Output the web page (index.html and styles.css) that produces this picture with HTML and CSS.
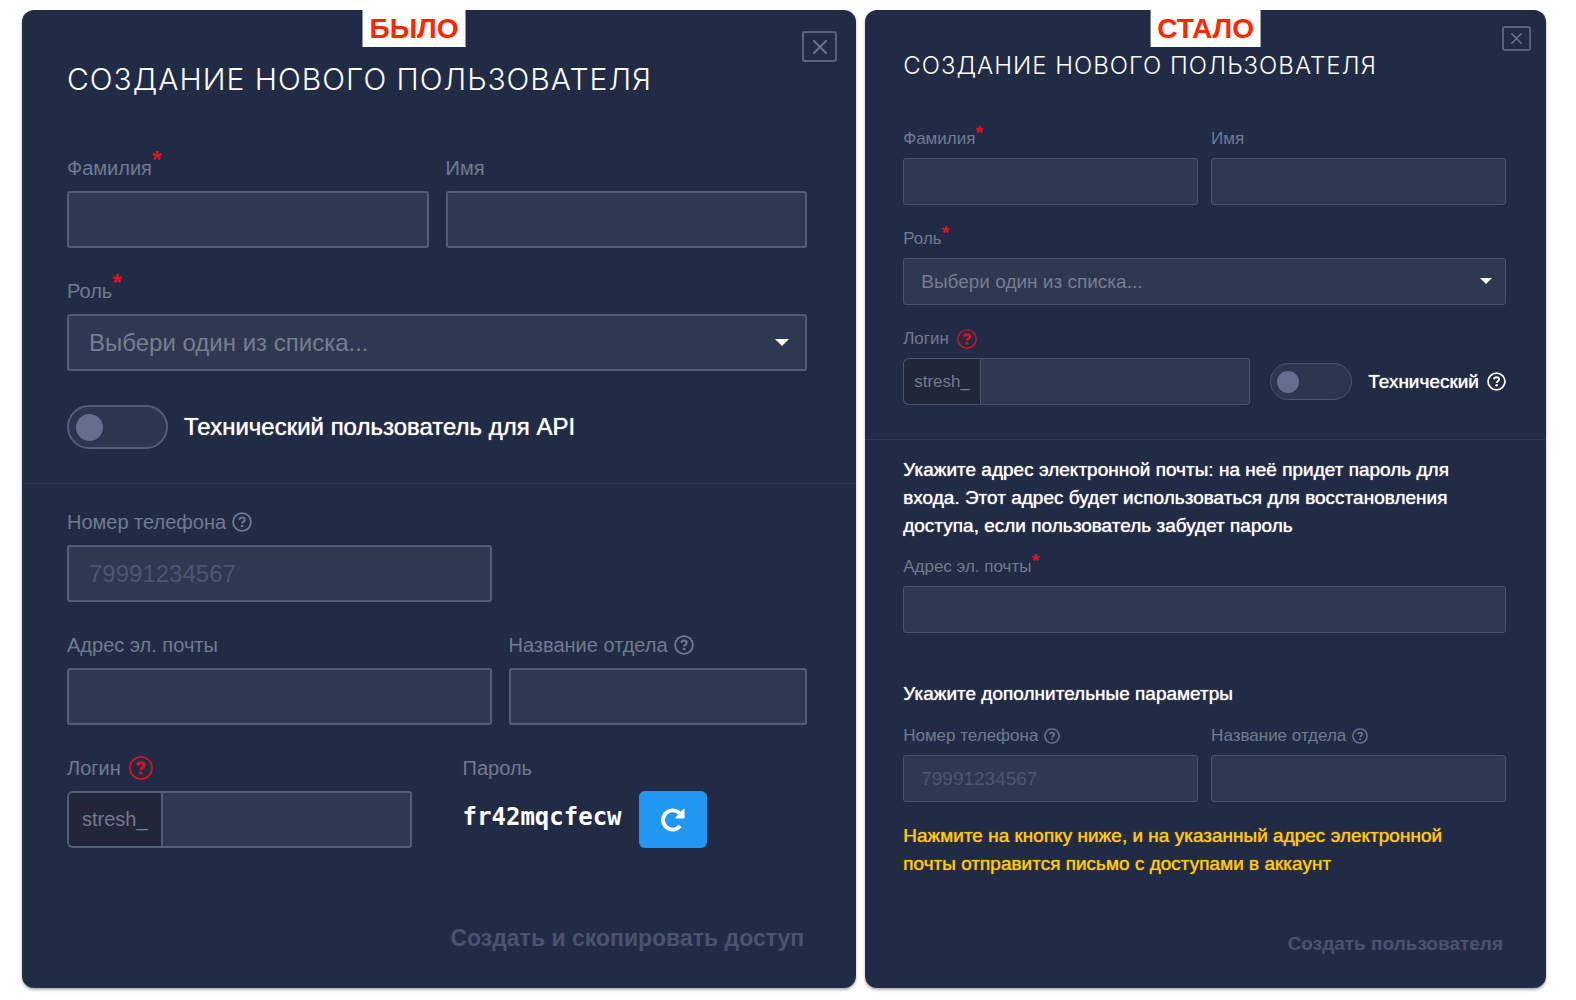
FILE: index.html
```html
<!DOCTYPE html>
<html lang="ru">
<head>
  <meta charset="UTF-8" />
  <meta name="viewport" content="width=device-width, initial-scale=1.0" />
  <title>Создание нового пользователя</title>
  <link rel="stylesheet" href="styles.css">
</head>
<body>
  <svg class="sprite" aria-hidden="true">
    <symbol id="icon-help" viewBox="0 0 20 20">
      <circle cx="10" cy="10" r="8.9" fill="none" stroke="currentColor" stroke-width="1.8" />
      <path d="M7.3 7.7C7.6 6.3 8.6 5.6 10 5.6c1.5 0 2.7.9 2.7 2.2 0 1.9-2.5 1.9-2.5 3.8" fill="none" stroke="currentColor" stroke-width="2" />
      <circle cx="10.1" cy="14" r="1.3" fill="currentColor" />
    </symbol>
    <symbol id="icon-help-bold" viewBox="0 0 24 24">
      <circle cx="12" cy="12" r="11" fill="none" stroke="currentColor" stroke-width="1.7" />
      <path d="M8.5 9.1C8.9 7.5 10.2 6.7 12 6.7c1.9 0 3.3 1 3.3 2.6 0 2.3-3.2 2.2-3.2 4.6" fill="none" stroke="currentColor" stroke-width="3.1" />
      <circle cx="12" cy="17" r="1.8" fill="currentColor" />
    </symbol>
    <symbol id="icon-close" viewBox="0 0 14 14">
      <path d="M1 1l12 12M13 1L1 13" fill="none" stroke="currentColor" stroke-width="1.8" stroke-linecap="round" />
    </symbol>
    <symbol id="icon-repeat" viewBox="0 0 24 24">
      <path d="M19.2 17.9A9.6 9.6 0 1 1 18.6 5.4" fill="none" stroke="currentColor" stroke-width="3.8" />
      <path d="M23.6 1.600v8.200q0 .8-.8.8h-7.600q-1.600-.1-.6-1.400l7.700-8.100q1.200-1 1.300.5z" fill="currentColor" />
    </symbol>
  </svg>

  <main class="compare">
    <form class="panel panel-before">
      <div class="tag">БЫЛО</div>
      <button type="button" class="close" aria-label="Закрыть"><svg><use href="#icon-close" /></svg></button>
      <h1>Создание нового пользователя</h1>
      <div class="row">
        <div class="field">
          <label for="oldSurname">Фамилия<span class="req">*</span></label>
          <input type="text" id="oldSurname" />
        </div>
        <div class="field">
          <label for="oldName">Имя</label>
          <input type="text" id="oldName" />
        </div>
      </div>
      <div class="row">
        <div class="field">
          <label for="oldRole">Роль<span class="req">*</span></label>
          <div class="select">
            <select id="oldRole"><option>Выбери один из списка...</option></select>
          </div>
        </div>
      </div>
      <label class="switch"><input type="checkbox" /><span>Технический пользователь для API</span></label>
      <hr />
      <div class="row split">
        <div class="field">
          <label for="oldPhone">Номер телефона <svg class="help"><use href="#icon-help" /></svg></label>
          <input type="text" id="oldPhone" placeholder="79991234567" />
        </div>
      </div>
      <div class="row split">
        <div class="field">
          <label for="oldEmail">Адрес эл. почты</label>
          <input type="text" id="oldEmail" />
        </div>
        <div class="field">
          <label for="oldDept">Название отдела <svg class="help"><use href="#icon-help" /></svg></label>
          <input type="text" id="oldDept" />
        </div>
      </div>
      <div class="row access">
        <div class="field">
          <label for="oldLogin">Логин <svg class="help help-red"><use href="#icon-help-bold" /></svg></label>
          <div class="prefixed">
            <span class="prefix">stresh_</span>
            <input type="text" id="oldLogin" />
          </div>
        </div>
        <div class="field">
          <label for="oldPassword">Пароль</label>
          <div class="password">
            <output id="oldPassword">fr42mqcfecw</output>
            <button type="button" class="refresh" aria-label="Обновить пароль"><svg><use href="#icon-repeat" /></svg></button>
          </div>
        </div>
      </div>
      <button type="submit" class="submit" disabled>Создать и скопировать доступ</button>
    </form>

    <form class="panel panel-after">
      <div class="tag">СТАЛО</div>
      <button type="button" class="close" aria-label="Закрыть"><svg><use href="#icon-close" /></svg></button>
      <h1>Создание нового пользователя</h1>
      <div class="row">
        <div class="field">
          <label for="newSurname">Фамилия<span class="req">*</span></label>
          <input type="text" id="newSurname" />
        </div>
        <div class="field">
          <label for="newName">Имя</label>
          <input type="text" id="newName" />
        </div>
      </div>
      <div class="row">
        <div class="field">
          <label for="newRole">Роль<span class="req">*</span></label>
          <div class="select">
            <select id="newRole"><option>Выбери один из списка...</option></select>
          </div>
        </div>
      </div>
      <div class="row login">
        <div class="field">
          <label for="newLogin">Логин <svg class="help help-red"><use href="#icon-help-bold" /></svg></label>
          <div class="prefixed">
            <span class="prefix">stresh_</span>
            <input type="text" id="newLogin" />
          </div>
        </div>
        <label class="switch"><input type="checkbox" /><span>Технический</span><svg class="help"><use href="#icon-help" /></svg></label>
      </div>
      <hr />
      <p class="note">Укажите адрес электронной почты: на неё придет пароль для входа. Этот адрес будет использоваться для восстановления доступа, если пользователь забудет пароль</p>
      <div class="row">
        <div class="field">
          <label for="newEmail">Адрес эл. почты<span class="req">*</span></label>
          <input type="text" id="newEmail" />
        </div>
      </div>
      <p class="note note-extra">Укажите дополнительные параметры</p>
      <div class="row">
        <div class="field">
          <label for="newPhone">Номер телефона <svg class="help"><use href="#icon-help" /></svg></label>
          <input type="text" id="newPhone" placeholder="79991234567" />
        </div>
        <div class="field">
          <label for="newDept">Название отдела <svg class="help"><use href="#icon-help" /></svg></label>
          <input type="text" id="newDept" />
        </div>
      </div>
      <p class="note note-warn">Нажмите на кнопку ниже, и на указанный адрес электронной почты отправится письмо с доступами в аккаунт</p>
      <button type="submit" class="submit" disabled>Создать пользователя</button>
    </form>
  </main>
</body>
</html>
```
FILE: styles.css
```css
* {
  box-sizing: border-box;
}
body {
  margin: 0;
  background: #fff;
  font-family: "Liberation Sans", Arial, sans-serif;
}
.sprite {
  display: none;
}
.compare {
  display: flex;
  gap: 9px;
  min-height: 100vh;
  padding: 10px 30px 12px 22px;
}
.panel {
  position: relative;
  display: flex;
  flex-direction: column;
  min-width: 0;
  border-radius: 12px;
  background: #222b46;
  box-shadow: 0 2px 3px rgba(0, 0, 0, 0.3);
  color: #fff;
}
.panel-before {
  --border: 2px solid #535d7b;
  --text: 24px;
  --label: 20px;
  --label-height: 24px;
  --label-gap: 11px;
  --field: 57px;
  --row-gap: 31px;
  --gap: 17px;
  --inset: 20px;
  --help: 20px;
  --help-red: 24px;
  --left: 45px;
  --right: 49px;
  flex: 835;
  padding: 49px var(--right) 30px var(--left);
}
.panel-after {
  --border: 1px solid #4a5471;
  --text: 19px;
  --label: 17px;
  --label-height: 20px;
  --label-gap: 9px;
  --field: 47px;
  --row-gap: 24px;
  --gap: 13px;
  --inset: 17px;
  --help: 16px;
  --help-red: 20px;
  --left: 38px;
  --right: 40px;
  flex: 680;
  padding: 40px var(--right) 30px var(--left);
}
.tag {
  position: absolute;
  top: 0;
  left: 50%;
  transform: translateX(-50%);
  padding: 0 7px;
  background: #fff;
  color: #ff2600;
  font-size: 28px;
  font-weight: bold;
  line-height: 37px;
}
.panel-before .tag {
  left: 47%;
}
.close {
  position: absolute;
  top: 21px;
  right: 19px;
  display: flex;
  align-items: center;
  justify-content: center;
  width: 35px;
  height: 31px;
  padding: 0;
  border: 2px solid #58617d;
  border-radius: 3px;
  background: none;
  color: #6b7491;
}
.close svg {
  width: 14px;
  height: 14px;
}
.panel-after .close {
  top: 16px;
  right: 15px;
  width: 29px;
  height: 25px;
}
.panel-after .close svg {
  width: 11px;
  height: 11px;
}
h1 {
  margin: 0 0 57px;
  font-family: Inter, "Liberation Sans", sans-serif;
  font-size: 30px;
  font-weight: 300;
  line-height: 40px;
  letter-spacing: 1px;
  text-transform: uppercase;
  white-space: nowrap;
}
.panel-after h1 {
  margin-bottom: 47px;
  font-size: 24px;
  line-height: 32px;
}
.row {
  display: flex;
  gap: var(--gap);
  margin-bottom: var(--row-gap);
}
.field {
  flex: 1;
  min-width: 0;
}
.split .field:first-child {
  flex: 0 0 calc((100% - var(--gap)) * 0.587);
}
.field > label {
  display: flex;
  align-items: center;
  height: var(--label-height);
  margin-bottom: var(--label-gap);
  color: #717a8f;
  font-size: var(--label);
  white-space: nowrap;
}
.req {
  align-self: flex-start;
  color: #e60f1e;
  font-size: var(--text);
  font-weight: bold;
  line-height: 8px;
}
.help {
  flex: none;
  width: var(--help);
  height: var(--help);
  margin-left: 6px;
}
.help-red {
  width: var(--help-red);
  height: var(--help-red);
  margin-left: 8px;
  color: #d8131f;
}
input[type="text"],
select {
  display: block;
  width: 100%;
  min-width: 0;
  height: var(--field);
  padding: 0 var(--inset);
  border: var(--border);
  border-radius: 3px;
  background: #2f3850;
  color: #fff;
  font-family: inherit;
  font-size: var(--text);
}
input::placeholder {
  color: #4c556f;
}
select {
  appearance: none;
  color: #767e90;
}
.select {
  position: relative;
}
.select::after {
  content: "";
  position: absolute;
  top: 50%;
  right: 18px;
  margin-top: -4px;
  border: 7px solid transparent;
  border-top-color: #fff;
  border-bottom: 0;
  pointer-events: none;
}
.panel-after .select::after {
  right: 14px;
  border-width: 6px 6px 0;
}
.switch {
  display: flex;
  align-items: center;
  font-size: var(--text);
  white-space: nowrap;
}
.switch span,
.note {
  text-shadow: 0 0 1px currentColor;
}
.switch input {
  appearance: none;
  display: flex;
  align-items: center;
  width: 101px;
  height: 44px;
  margin: 0 16px 0 0;
  padding: 0 7px;
  border: var(--border);
  border-radius: 22px;
  background: #2c3650;
}
.switch input::before {
  content: "";
  width: 27px;
  height: 27px;
  border-radius: 50%;
  background: #656e8e;
}
.panel-before .switch {
  margin-top: 3px;
}
.panel-after .switch input {
  width: 82px;
  height: 37px;
  margin-right: 16px;
  padding: 0 6px;
}
.panel-after .switch input::before {
  width: 22px;
  height: 22px;
}
.panel-after .switch .help {
  width: 19px;
  height: 19px;
  margin-left: 8px;
}
hr {
  width: auto;
  height: 1px;
  margin: 34px calc(-1 * var(--right)) 26px calc(-1 * var(--left));
  border: 0;
  background: #2f3954;
}
.prefixed {
  display: flex;
}
.prefix {
  display: flex;
  align-items: center;
  flex: none;
  padding: 0 13px;
  border: var(--border);
  border-right: 0;
  border-radius: 6px 0 0 6px;
  background: #22263a;
  color: #717a8f;
  font-size: var(--label);
}
.panel-after .prefix {
  padding: 0 10px;
}
.prefixed input[type="text"] {
  border-radius: 0 3px 3px 0;
}
.access {
  gap: 51px;
}
.password {
  display: flex;
  gap: 17px;
}
.password output {
  font-family: "DejaVu Sans Mono", monospace;
  font-size: 24px;
  font-weight: bold;
  line-height: 52px;
}
.refresh {
  display: flex;
  align-items: center;
  justify-content: center;
  width: 68px;
  height: 57px;
  padding: 0;
  border: 0;
  border-radius: 6px;
  background: #2196f3;
  color: #fff;
}
.refresh svg {
  width: 24px;
  height: 24px;
}
.login {
  align-items: flex-end;
  gap: 20px;
  margin-bottom: 0;
}
.login .switch {
  height: var(--field);
}
.note {
  margin: 0 0 17px;
  padding-right: 24px;
  font-size: 19px;
  line-height: 28px;
}
.panel-after hr {
  margin-bottom: 16px;
}
.note-extra {
  margin: 23px 0 18px;
}
.note-warn {
  margin: -4px 0 0;
  color: #ffca0d;
}
.submit {
  align-self: flex-end;
  margin-top: auto;
  padding: 0 3px;
  border: 0;
  background: none;
  color: #4a536e;
  font-family: inherit;
  font-size: 23px;
  font-weight: bold;
  line-height: 40px;
}
.panel-after .submit {
  font-size: 19px;
  line-height: 28px;
}
```
